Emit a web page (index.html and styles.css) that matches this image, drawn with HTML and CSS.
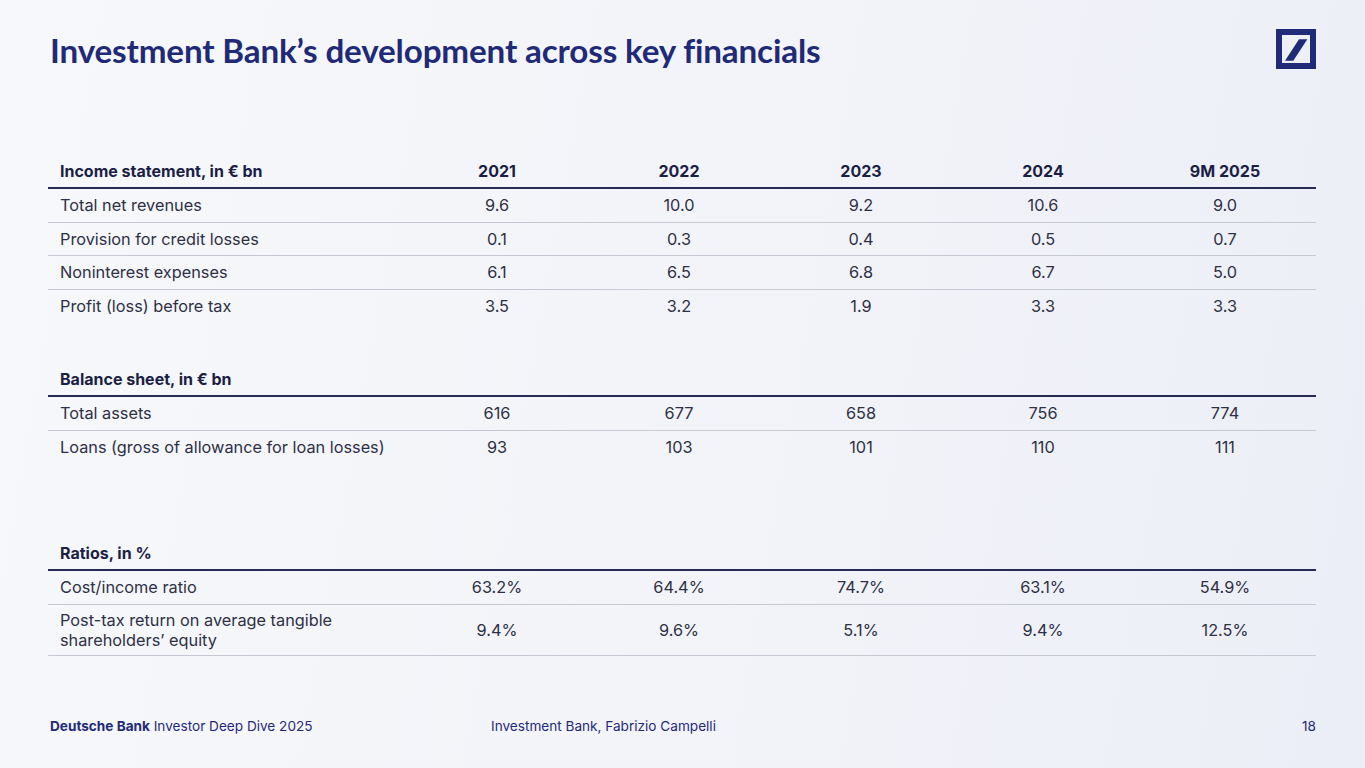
FILE: index.html
```html
<!DOCTYPE html>
<html lang="en">
<head>
<meta charset="utf-8">
<title>Investment Bank's development across key financials</title>
<link rel="stylesheet" href="styles.css">
</head>
<body>
<div class="slide">
  <header class="top">
    <h1 class="title">Investment Bank’s development across key financials</h1>
    <svg class="logo" width="40" height="40" viewBox="0 0 40 40" aria-label="Deutsche Bank logo">
      <rect x="3" y="3" width="34" height="34" fill="none" stroke="#1f2a78" stroke-width="6"/>
      <polygon points="9,31.7 17.3,31.7 31.3,10.3 23,10.3" fill="#1f2a78"/>
    </svg>
  </header>

  <main class="tables">
    <table class="fin">
      <colgroup><col class="c-label"><col class="c-val"><col class="c-val"><col class="c-val"><col class="c-val"><col class="c-val"></colgroup>
      <thead>
        <tr class="head"><th>Income statement, in € bn</th><th>2021</th><th>2022</th><th>2023</th><th>2024</th><th>9M 2025</th></tr>
      </thead>
      <tbody>
        <tr><td>Total net revenues</td><td>9.6</td><td>10.0</td><td>9.2</td><td>10.6</td><td>9.0</td></tr>
        <tr><td>Provision for credit losses</td><td>0.1</td><td>0.3</td><td>0.4</td><td>0.5</td><td>0.7</td></tr>
        <tr><td>Noninterest expenses</td><td>6.1</td><td>6.5</td><td>6.8</td><td>6.7</td><td>5.0</td></tr>
        <tr class="last"><td>Profit (loss) before tax</td><td>3.5</td><td>3.2</td><td>1.9</td><td>3.3</td><td>3.3</td></tr>
      </tbody>
    </table>

    <table class="fin sec2">
      <colgroup><col class="c-label"><col class="c-val"><col class="c-val"><col class="c-val"><col class="c-val"><col class="c-val"></colgroup>
      <thead>
        <tr class="head"><th>Balance sheet, in € bn</th><th></th><th></th><th></th><th></th><th></th></tr>
      </thead>
      <tbody>
        <tr><td>Total assets</td><td>616</td><td>677</td><td>658</td><td>756</td><td>774</td></tr>
        <tr class="last"><td>Loans (gross of allowance for loan losses)</td><td>93</td><td>103</td><td>101</td><td>110</td><td>111</td></tr>
      </tbody>
    </table>

    <table class="fin sec3">
      <colgroup><col class="c-label"><col class="c-val"><col class="c-val"><col class="c-val"><col class="c-val"><col class="c-val"></colgroup>
      <thead>
        <tr class="head"><th>Ratios, in %</th><th></th><th></th><th></th><th></th><th></th></tr>
      </thead>
      <tbody>
        <tr><td>Cost/income ratio</td><td>63.2%</td><td>64.4%</td><td>74.7%</td><td>63.1%</td><td>54.9%</td></tr>
        <tr class="tall"><td>Post-tax return on average tangible<br>shareholders’ equity</td><td>9.4%</td><td>9.6%</td><td>5.1%</td><td>9.4%</td><td>12.5%</td></tr>
      </tbody>
    </table>
  </main>

  <footer class="foot">
    <div class="foot-left"><b>Deutsche Bank</b> Investor Deep Dive 2025</div>
    <div class="foot-mid">Investment Bank, Fabrizio Campelli</div>
    <div class="foot-right">18</div>
  </footer>
</div>
</body>
</html>
```

FILE: styles.css
```css
html, body {
  margin: 0;
  padding: 0;
}
body {
  width: 1365px;
  height: 768px;
  overflow: hidden;
  font-family: Inter, "Noto Sans", sans-serif;
  background: linear-gradient(100deg, #f7f8fb 0%, #f3f4f9 50%, #eceef7 100%);
}
.slide {
  width: 1365px;
  height: 768px;
  box-sizing: border-box;
  padding: 0 49px 0 48px;
  display: flex;
  flex-direction: column;
}
.top {
  display: flex;
  justify-content: space-between;
  align-items: flex-start;
  height: 155px;
}
.title {
  margin: 30px 0 0 2px;
  font-family: Lato, sans-serif;
  font-weight: 700;
  font-size: 33.2px;
  line-height: 40px;
  letter-spacing: -0.15px;
  color: #1f2a78;
}
.logo {
  margin-top: 29px;
  margin-right: 0;
  flex: none;
}
.tables {
  flex: 1;
}
.fin {
  width: 1268px;
  border-collapse: collapse;
  table-layout: fixed;
  font-size: 16.3px;
  color: #2e3045;
}
.c-label { width: 358px; }
.c-val { width: 182px; }
.fin th {
  font-weight: 700;
  font-size: 16px;
  color: #1c1f45;
  height: 31px;
  padding: 0 0 1px;
  text-align: center;
  border-bottom: 2px solid #262a55;
  vertical-align: middle;
}
.fin th:first-child {
  text-align: left;
  padding-left: 12px;
}
.fin td {
  height: 32.5px;
  padding: 0;
  line-height: 20px;
  text-align: center;
  border-bottom: 1px solid #c6c9d3;
  vertical-align: middle;
}
.fin td:first-child {
  text-align: left;
  padding-left: 12px;
}
.fin tr.last td {
  border-bottom: none;
}
.fin tr.tall td {
  height: 50px;
}
.sec2 { margin-top: 41px; }
.sec3 { margin-top: 74px; }
.foot {
  height: 50px;
  display: flex;
  align-items: flex-start;
  font-size: 13.6px;
  color: #1f2a78;
  padding-left: 2px;
}
.foot b {
  font-weight: 700;
}
.foot-left {
  width: 441px;
}
.foot-mid {
  flex: 1;
}
.foot-right {
  text-align: right;
}
```
